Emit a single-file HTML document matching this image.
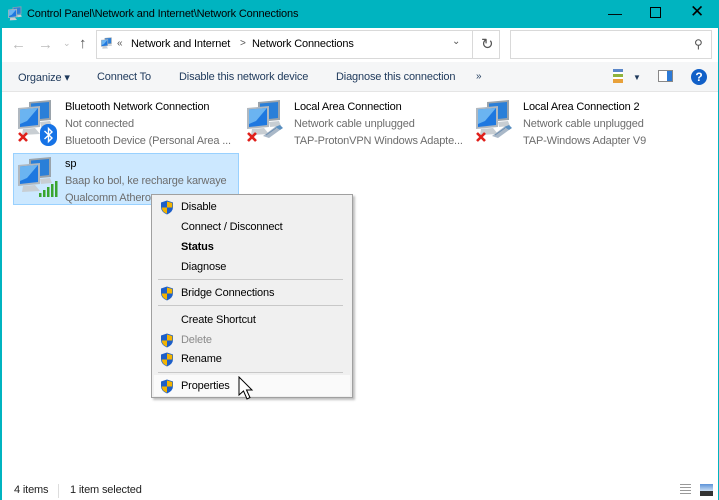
<!DOCTYPE html>
<html><head><meta charset="utf-8"><style>
*{margin:0;padding:0;box-sizing:border-box}
body{width:719px;height:500px;overflow:hidden;background:#fff;font-family:"Liberation Sans",sans-serif;font-size:11px;letter-spacing:-0.15px;color:#000;position:relative}
.a{position:absolute;white-space:nowrap}
.g{color:#6d6d6d}
.title{position:absolute;left:0;top:0;width:719px;height:28px;background:#00b4c0}
.frame{position:absolute;left:0;top:28px;width:2px;height:472px;background:#00b4c0}
.frame2{position:absolute;right:0;top:28px;width:1px;height:472px;background:#00b4c0}
.box{position:absolute;border:1px solid #d9d9d9;background:#fff}
.tb{position:absolute;left:2px;top:62px;width:716px;height:30px;background:#f5f6f7;border-bottom:1px solid #e5e5e5}
.tb span{position:absolute;top:9px;color:#1e395b}
.menu{position:absolute;left:151px;top:194px;width:202px;height:204px;background:#f0f0f0;border:1px solid #a0a0a0;box-shadow:2px 2px 2px rgba(0,0,0,.25)}
.menu .i{position:absolute;left:29px}
.menu .s{position:absolute;height:1px;background:#c8c8c8}
.sh{position:absolute;left:8px;width:14px;height:15px}
</style></head><body>
<svg width="0" height="0" style="position:absolute">
<defs>
<symbol id="pc" viewBox="0 0 40 40">
<path d="M14 3 L36 1 L36 21 L14 23Z" fill="#9aa3ab"/>
<path d="M16 4.5 L34 3 L34 19 L16 21Z" fill="#2a7fd8"/>
<path d="M3 9 L25 7 L25 28 L3 30Z" fill="#b0b8c0"/>
<path d="M5 10.5 L23 9 L23 26 L5 28Z" fill="#1e78e0"/>
<path d="M5 10.5 L23 9 L12 22 L5 25Z" fill="#7ec3f5" opacity=".8"/>
<path d="M8 30 L20 29 L25 35 L7 36Z" fill="#c8ced3"/>
<path d="M25 23 L35 22 L37 27 L26 28Z" fill="#c8ced3"/>
</symbol>
<symbol id="x" viewBox="0 0 12 12"><path d="M2 2L10 10M10 2L2 10" stroke="#e0201b" stroke-width="2.6"/></symbol>
<symbol id="sh" viewBox="0 0 14 15"><path d="M7 0.5 L13 2.5 L13 7 Q13 12 7 14.5 Q1 12 1 7 L1 2.5Z" fill="#1d5fc8"/><path d="M7 1.5 L7 7.5 L12.3 7.5 L12.3 3 Z" fill="#f4b400"/><path d="M7 7.5 L1.8 7.5 Q2 12 7 13.8Z" fill="#f4b400"/></symbol>
<symbol id="plug" viewBox="0 0 22 14"><path d="M1 12 L13 3 L18 6 L7 14Z" fill="#a9b8c8"/><path d="M13 3 L18 1 L21 4 L18 6Z" fill="#5a8fc0"/><path d="M4 11L14 4" stroke="#6c8db0" stroke-width="1"/></symbol>
</defs></svg>

<div class="title"></div>
<div class="frame"></div><div class="frame2"></div>
<svg class="a" style="left:7px;top:6px" width="16" height="16" viewBox="0 0 40 40"><use href="#pc"/></svg>
<div class="a" style="left:27px;top:8px">Control Panel\Network and Internet\Network Connections</div>
<div class="a" style="left:608px;top:5px;font-size:14px">&#8212;</div>
<div class="a" style="left:650px;top:7px;width:11px;height:11px;border:1px solid #000"></div>
<div class="a" style="left:690px;top:2px;font-size:17px">&#10005;</div>

<div class="a" style="left:11px;top:36px;color:#bbb;font-size:15px">&#8592;</div>
<div class="a" style="left:38px;top:36px;color:#bbb;font-size:15px">&#8594;</div>
<div class="a" style="left:63px;top:38px;color:#bbb;font-size:9px">&#8964;</div>
<div class="a" style="left:79px;top:35px;color:#555;font-size:15px">&#8593;</div>
<div class="box" style="left:96px;top:30px;width:404px;height:29px"></div>
<div class="a" style="left:472px;top:30px;width:1px;height:29px;background:#d9d9d9"></div>
<svg class="a" style="left:100px;top:37px" width="13" height="13" viewBox="0 0 40 40"><use href="#pc"/></svg>
<div class="a" style="left:117px;top:38px;color:#555;font-size:10px">&laquo;</div>
<div class="a" style="left:131px;top:38px">Network and Internet</div>
<div class="a" style="left:240px;top:38px;font-size:10px;color:#555">&gt;</div>
<div class="a" style="left:252px;top:38px">Network Connections</div>
<div class="a" style="left:452px;top:36px;color:#555;font-size:10px">&#8964;</div>
<div class="a" style="left:481px;top:35px;color:#555;font-size:15px">&#8635;</div>
<div class="box" style="left:510px;top:30px;width:202px;height:29px"></div>
<div class="a" style="left:694px;top:37px;color:#555;font-size:12px">&#9906;</div>

<div class="tb">
<span style="left:16px">Organize &#9662;</span>
<span style="left:95px">Connect To</span>
<span style="left:177px">Disable this network device</span>
<span style="left:334px">Diagnose this connection</span>
<span style="left:474px;font-size:10px">&raquo;</span>
<div class="a" style="left:611px;top:7px;width:10px;height:14px;background:linear-gradient(#5b87c9 0 3px,#fff 3px 5px,#8fb33d 5px 8px,#fff 8px 10px,#e8a13a 10px 14px)"></div>
<span style="left:631px;font-size:8px;top:11px">&#9660;</span>
<div class="a" style="left:656px;top:8px;width:15px;height:12px;border:1px solid #888;background:linear-gradient(90deg,#fff 0 8px,#2c7ad6 8px)"></div>
<div class="a" style="left:689px;top:7px;width:16px;height:16px;border-radius:50%;background:#1160c8;color:#fff;font-weight:bold;font-size:12px;text-align:center;line-height:16px">?</div>
</div>

<!-- items -->
<svg class="a" style="left:15px;top:99px" width="40" height="40"><use href="#pc"/></svg>
<svg class="a" style="left:17px;top:131px" width="12" height="12"><use href="#x"/></svg>
<svg class="a" style="left:40px;top:124px" width="17" height="22" viewBox="0 0 17 22"><rect x="0" y="0" width="17" height="22" rx="8" fill="#1673e6"/><path d="M4.5 7 L12 14 L8.5 17.5 L8.5 4.5 L12 8 L4.5 15" stroke="#fff" stroke-width="1.4" fill="none"/></svg>
<div class="a" style="left:65px;top:101px">Bluetooth Network Connection</div>
<div class="a g" style="left:65px;top:118px">Not connected</div>
<div class="a g" style="left:65px;top:135px">Bluetooth Device (Personal Area ...</div>

<svg class="a" style="left:244px;top:99px" width="40" height="40"><use href="#pc"/></svg>
<svg class="a" style="left:246px;top:131px" width="12" height="12"><use href="#x"/></svg>
<svg class="a" style="left:262px;top:124px" width="22" height="14"><use href="#plug"/></svg>
<div class="a" style="left:294px;top:101px">Local Area Connection</div>
<div class="a g" style="left:294px;top:118px">Network cable unplugged</div>
<div class="a g" style="left:294px;top:135px">TAP-ProtonVPN Windows Adapte...</div>

<svg class="a" style="left:473px;top:99px" width="40" height="40"><use href="#pc"/></svg>
<svg class="a" style="left:475px;top:131px" width="12" height="12"><use href="#x"/></svg>
<svg class="a" style="left:491px;top:124px" width="22" height="14"><use href="#plug"/></svg>
<div class="a" style="left:523px;top:101px">Local Area Connection 2</div>
<div class="a g" style="left:523px;top:118px">Network cable unplugged</div>
<div class="a g" style="left:523px;top:135px">TAP-Windows Adapter V9</div>

<div class="a" style="left:13px;top:153px;width:226px;height:52px;background:#cce8ff;border:1px solid #99d1ff"></div>
<svg class="a" style="left:15px;top:156px" width="40" height="40"><use href="#pc"/></svg>
<svg class="a" style="left:38px;top:180px" width="20" height="17" viewBox="0 0 20 17"><g fill="#3aa52e"><rect x="1" y="13" width="2.5" height="4"/><rect x="5" y="10" width="2.5" height="7"/><rect x="9" y="7" width="2.5" height="10"/><rect x="13" y="4" width="2.5" height="13"/><rect x="17" y="1" width="2.5" height="16"/></g></svg>
<div class="a" style="left:65px;top:158px">sp</div>
<div class="a g" style="left:65px;top:175px">Baap ko bol, ke recharge karwaye</div>
<div class="a g" style="left:65px;top:192px">Qualcomm Atheros</div>

<div class="menu">
<svg class="sh" style="top:5px"><use href="#sh"/></svg><div class="i" style="top:6px">Disable</div>
<div class="i" style="top:26px">Connect / Disconnect</div>
<div class="i" style="top:46px;font-weight:bold">Status</div>
<div class="i" style="top:66px">Diagnose</div>
<div class="s" style="top:84px;left:6px;width:185px"></div>
<svg class="sh" style="top:91px"><use href="#sh"/></svg><div class="i" style="top:92px">Bridge Connections</div>
<div class="s" style="top:110px;left:6px;width:185px"></div>
<div class="i" style="top:119px">Create Shortcut</div>
<svg class="sh" style="top:138px"><use href="#sh"/></svg><div class="i" style="top:139px;color:#8a8a8a">Delete</div>
<svg class="sh" style="top:157px"><use href="#sh"/></svg><div class="i" style="top:158px">Rename</div>
<div class="s" style="top:177px;left:6px;width:185px"></div>
<div class="a" style="left:2px;top:180px;width:196px;height:21px;background:#fafafa"></div>
<svg class="sh" style="top:184px"><use href="#sh"/></svg><div class="i" style="top:185px">Properties</div>
</div>
<svg class="a" style="left:238px;top:376px" width="18" height="26" viewBox="0 0 18 26"><path d="M1 1 L1 19 L5.5 15 L9 23 L12 21.5 L8.5 14 L14 14Z" fill="#fff" stroke="#000" stroke-width="1"/></svg>

<div class="a" style="left:14px;top:484px;color:#222">4 items</div>
<div class="a" style="left:58px;top:484px;width:1px;height:14px;background:#ddd"></div>
<div class="a" style="left:70px;top:484px;color:#222">1 item selected</div>
<div class="a" style="left:680px;top:484px;width:11px;height:12px;background:repeating-linear-gradient(#999 0 1px,#fff 1px 3px)"></div>
<div class="a" style="left:700px;top:484px;width:13px;height:12px;background:linear-gradient(#5c93d8,#cfe2f5 60%,#333 60%)"></div>
</body></html>
